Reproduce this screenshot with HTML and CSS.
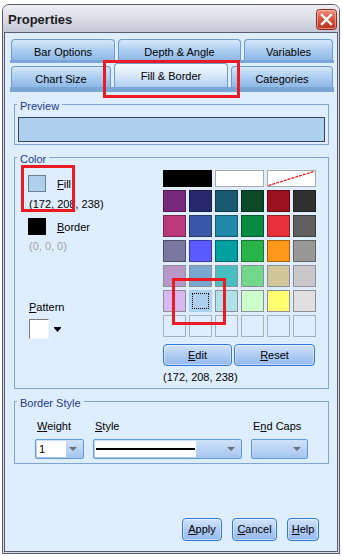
FILE: index.html
```html
<!DOCTYPE html>
<html lang="en">
<head>
    <meta charset="UTF-8">
    <meta name="viewport" content="width=device-width, initial-scale=1.0">
    <title>Properties</title>
    <link rel="stylesheet" href="styles.css">
</head>
<body>
<div class="shot">
    <div class="window">
        <div class="titlebar">
            <span class="title">Properties</span>
            <button class="close-btn" type="button" aria-label="Close">
                <svg width="21" height="21" viewBox="0 0 21 21">
                    <defs>
                        <linearGradient id="closeGrad" x1="0" y1="0" x2="0" y2="1">
                            <stop offset="0" stop-color="#ee9a84"/>
                            <stop offset="0.45" stop-color="#d8553f"/>
                            <stop offset="1" stop-color="#b9301f"/>
                        </linearGradient>
                    </defs>
                    <rect x="0.5" y="0.5" width="20" height="20" rx="3" fill="url(#closeGrad)" stroke="#8d2b1d"/>
                    <rect x="1.5" y="1.5" width="18" height="18" rx="2" fill="none" stroke="#f7c6b8" stroke-opacity="0.6"/>
                    <path d="M6 6 L15 15 M15 6 L6 15" stroke="#fff" stroke-width="2.4" stroke-linecap="square"/>
                </svg>
            </button>
        </div>

        <div class="client">
            <div class="tabs">
                <div class="tab-row">
                    <div class="tab w-bar">Bar Options</div>
                    <div class="tab w-depth">Depth &amp; Angle</div>
                    <div class="tab w-vars">Variables</div>
                </div>
                <div class="tab-strip"></div>
                <div class="tab-row">
                    <div class="tab w-size">Chart Size</div>
                    <div class="tab active w-fill">Fill &amp; Border</div>
                    <div class="tab w-cat">Categories</div>
                </div>
                <div class="tab-strip wide"></div>
            </div>

            <div class="panel">
                <fieldset class="group">
                    <legend>Preview</legend>
                    <div class="preview-body">
                        <div class="preview-bar"></div>
                    </div>
                </fieldset>

                <fieldset class="group">
                    <legend>Color</legend>
                    <div class="color-body">
                        <div class="color-left">
                            <div class="swatch-row">
                                <span class="swatch fill"></span>
                                <span><u>F</u>ill</span>
                            </div>
                            <div class="rgb">(172, 208, 238)</div>
                            <div class="swatch-row border-row">
                                <span class="swatch black"></span>
                                <span><u>B</u>order</span>
                            </div>
                            <div class="rgb muted">(0, 0, 0)</div>
                            <div class="pattern-label"><u>P</u>attern</div>
                            <div class="pattern">
                                <span class="pattern-box"></span>
                                <svg width="7" height="5" viewBox="0 0 7 5"><path d="M0 0H7V1L3.5 5L0 1Z" fill="#000"/></svg>
                            </div>
                        </div>

                        <div class="palette">
                            <div class="palette-top">
                                <span class="cell black"></span>
                                <span class="cell white"></span>
                                <span class="cell white">
                                    <svg width="47" height="15" viewBox="0 0 47 15"><line x1="0.5" y1="14.5" x2="46" y2="0.5" stroke="#e01010" stroke-width="1.2" stroke-dasharray="3 1"/></svg>
                                </span>
                            </div>
                            <div class="palette-grid">
                                <span class="cell" style="background:#7a287a"></span>
                                <span class="cell" style="background:#28286e"></span>
                                <span class="cell" style="background:#1a5870"></span>
                                <span class="cell" style="background:#0a4a28"></span>
                                <span class="cell" style="background:#9c101c"></span>
                                <span class="cell" style="background:#303030"></span>

                                <span class="cell" style="background:#b83a7a"></span>
                                <span class="cell" style="background:#3a58a8"></span>
                                <span class="cell" style="background:#2288aa"></span>
                                <span class="cell" style="background:#088a42"></span>
                                <span class="cell" style="background:#e83038"></span>
                                <span class="cell" style="background:#606060"></span>

                                <span class="cell" style="background:#7878a0"></span>
                                <span class="cell" style="background:#5a5aff"></span>
                                <span class="cell" style="background:#00a0a0"></span>
                                <span class="cell" style="background:#28b448"></span>
                                <span class="cell" style="background:#ff9818"></span>
                                <span class="cell" style="background:#989898"></span>

                                <span class="cell" style="background:#b898c8"></span>
                                <span class="cell" style="background:#78a8d0"></span>
                                <span class="cell" style="background:#48c0c0"></span>
                                <span class="cell" style="background:#70d888"></span>
                                <span class="cell" style="background:#d0c898"></span>
                                <span class="cell" style="background:#c8c8c8"></span>

                                <span class="cell" style="background:#d8b8f0"></span>
                                <span class="cell selected" style="background:#acd0ee"></span>
                                <span class="cell" style="background:#b0e0e8"></span>
                                <span class="cell" style="background:#ccffcc"></span>
                                <span class="cell" style="background:#ffff70"></span>
                                <span class="cell" style="background:#e0e0e0"></span>

                                <span class="cell empty"></span>
                                <span class="cell empty"></span>
                                <span class="cell empty"></span>
                                <span class="cell empty"></span>
                                <span class="cell empty"></span>
                                <span class="cell empty"></span>
                            </div>
                            <div class="palette-actions">
                                <button class="btn btn-edit" type="button"><u>E</u>dit</button>
                                <button class="btn btn-reset" type="button"><u>R</u>eset</button>
                            </div>
                            <div class="palette-rgb">(172, 208, 238)</div>
                        </div>
                    </div>
                </fieldset>

                <fieldset class="group">
                    <legend>Border Style</legend>
                    <div class="border-body">
                        <div class="field">
                            <span class="field-label"><u>W</u>eight</span>
                            <div class="select w-weight">
                                <span class="select-field weight-field">1</span>
                                <span class="select-arrow"></span>
                            </div>
                        </div>
                        <div class="field">
                            <span class="field-label"><u>S</u>tyle</span>
                            <div class="select w-style">
                                <span class="select-field style-field"><span class="line-sample"></span></span>
                                <span class="select-arrow"></span>
                            </div>
                        </div>
                        <div class="field">
                            <span class="field-label">E<u>n</u>d Caps</span>
                            <div class="select w-caps">
                                <span class="select-arrow"></span>
                            </div>
                        </div>
                    </div>
                </fieldset>

                <div class="dialog-actions">
                    <button class="btn btn-apply" type="button"><u>A</u>pply</button>
                    <button class="btn btn-cancel" type="button"><u>C</u>ancel</button>
                    <button class="btn btn-help" type="button"><u>H</u>elp</button>
                </div>
            </div>
        </div>
    </div>

    <!-- red callouts drawn over the dialog -->
    <div class="mark mark-tab"></div>
    <div class="mark mark-fill"></div>
    <div class="mark mark-cell"></div>
</div>
</body>
</html>
```

FILE: styles.css
```css
* {
    box-sizing: border-box;
}

body {
    margin: 0;
    background: #fff;
    font-family: "Liberation Sans", Arial, sans-serif;
    font-size: 11px;
    color: #000;
}

.shot {
    position: relative;
    width: 342px;
    height: 556px;
    padding: 4px 0 0 2px;
}

/* window frame */
.window {
    width: 338px;
    height: 550px;
    border: 1px solid #5c5c70;
    border-radius: 7px 7px 0 0;
    background: #d6d8e4;
    display: flex;
    flex-direction: column;
}

.titlebar {
    flex: none;
    height: 27px;
    display: flex;
    align-items: center;
    justify-content: space-between;
    padding: 2px 2px 0 5px;
    border-radius: 6px 6px 0 0;
    background: linear-gradient(#efeff4, #d9dbe6 55%, #c4c7d7);
}

.title {
    font-size: 13px;
    font-weight: bold;
    line-height: 16px;
    color: #1c1c1c;
}

.close-btn {
    width: 21px;
    height: 21px;
    padding: 0;
    border: 0;
    background: none;
}

.close-btn svg {
    display: block;
}

.client {
    flex: 1;
    margin: 0 1px 1px;
    border: 1px solid #5c5c70;
    background: #dfeefe;
    display: flex;
    flex-direction: column;
}

/* tabs */
.tabs {
    padding: 6px 3px 0 6px;
}

.tab-row {
    display: flex;
    align-items: flex-end;
    gap: 3px;
}

.tab {
    height: 21px;
    padding-top: 6px;
    line-height: 13px;
    text-align: center;
    border: 1px solid #6b9bd0;
    border-bottom: 0;
    border-radius: 4px 4px 0 0;
    background: linear-gradient(#d6e8fb, #a9cbef 55%, #8fb9e6);
}

.tab.active {
    height: 24px;
    background: linear-gradient(#f6faff, #d8e8fa 50%, #aecdf0);
}

.w-bar { width: 104px; }
.w-depth { width: 123px; }
.w-vars { width: 89px; }
.w-size { width: 100px; }
.w-fill { width: 114px; }
.w-cat { width: 102px; }

.tab-strip {
    height: 3px;
    margin-left: -1px;
    background: #7aa7d8;
}

.tab-strip.wide {
    height: 5px;
}

/* panel */
.panel {
    flex: 1;
    padding: 4px 8px 0 9px;
    display: flex;
    flex-direction: column;
}

.group {
    margin: 0;
    padding: 0;
    min-width: 0;
    border: 1px solid #7fa6d3;
}

.group + .group {
    margin-top: 4px;
}

.group legend {
    margin-left: 2px;
    padding: 4px 3px 0;
    line-height: 12px;
    color: #22398c;
}

.preview-body {
    padding: 5px 3px 2px;
}

.preview-bar {
    height: 25px;
    border: 1px solid #3a4656;
    background: #acd0ee;
}

/* color group */
.color-body {
    display: flex;
    padding: 5px 0 4px 13px;
}

.color-left {
    width: 135px;
    padding-top: 5px;
}

.swatch-row {
    display: flex;
    align-items: center;
    gap: 11px;
    height: 17px;
}

.swatch-row.border-row {
    margin-top: 7px;
}

.swatch {
    width: 18px;
    height: 17px;
    border: 1px solid #6f8092;
}

.swatch.fill {
    background: #acd0ee;
}

.swatch.black {
    background: #000;
    border-color: #000;
}

.rgb {
    margin: 6px 0 0 1px;
    line-height: 13px;
}

.rgb.muted {
    margin-top: 5px;
    color: #a0a0a0;
}

.pattern-label {
    margin: 48px 0 0 1px;
    line-height: 13px;
}

.pattern {
    display: flex;
    align-items: center;
    gap: 5px;
    margin: 5px 0 0 1px;
}

.pattern-box {
    width: 20px;
    height: 20px;
    background: #fff;
    border: 1px solid;
    border-color: #7c7c7c #f4f4f4 #f4f4f4 #7c7c7c;
}

.palette {
    width: 153px;
}

.palette-top {
    display: flex;
    gap: 3px;
    height: 17px;
}

.palette-top .cell {
    flex: 1;
}

.palette-grid {
    display: grid;
    grid-template-columns: repeat(6, 23px);
    grid-auto-rows: 22px;
    gap: 3px;
    margin-top: 3px;
}

.cell {
    display: block;
    position: relative;
    border: 1px solid rgba(0, 0, 0, 0.35);
}

.cell svg {
    display: block;
}

.palette-grid .cell:nth-child(n+19) {
    border-color: #8f8f9a;
}

.cell.black {
    background: #000;
    border-color: #000;
}

.cell.white {
    background: #fff;
    border-color: #a8a8a8;
}

.palette-grid .cell.selected {
    border-color: #acd0ee;
}

.cell.selected::after {
    content: "";
    position: absolute;
    inset: 2px;
    border: 1px dotted #000;
}

.palette-grid .cell.empty {
    background: transparent;
    border-color: #a7afba;
}

.palette-actions {
    display: flex;
    gap: 2px;
    margin-top: 7px;
}

.palette-rgb {
    margin-top: 5px;
    line-height: 13px;
}

/* buttons */
.btn {
    height: 22px;
    padding: 0;
    font: inherit;
    line-height: 13px;
    color: #000;
    border: 1px solid #2f7bdb;
    border-radius: 4px;
    background: linear-gradient(#d3e4fb, #b0ccf3 50%, #95baee);
    box-shadow: inset 0 0 0 1px rgba(255, 255, 255, 0.45);
}

.btn-edit { width: 69px; }
.btn-reset { width: 81px; }
.btn-apply { width: 40px; height: 23px; }
.btn-cancel { width: 45px; height: 23px; }
.btn-help { width: 32px; height: 23px; }

/* border style group */
.border-body {
    display: flex;
    gap: 9px;
    padding: 11px 0 4px 20px;
}

.field {
    display: flex;
    flex-direction: column;
    gap: 6px;
}

.field-label {
    padding-left: 2px;
    line-height: 13px;
}

.select {
    height: 20px;
    padding: 1px;
    display: flex;
    align-items: center;
    border: 1px solid #5f9be2;
    border-radius: 2px;
    background: linear-gradient(#cfe2f9, #a5c5f0);
}

.w-weight { width: 49px; }
.w-style { width: 149px; }
.w-caps { width: 57px; }

.select-field {
    align-self: stretch;
    display: flex;
    align-items: center;
    background: #fff;
}

.weight-field {
    width: 29px;
    padding-left: 2px;
}

.style-field {
    width: 101px;
    padding: 0 1px;
}

.line-sample {
    width: 100%;
    height: 2px;
    background: #000;
}

.select-arrow {
    margin-left: auto;
    margin-right: 5px;
    border-left: 4px solid transparent;
    border-right: 4px solid transparent;
    border-top: 4px solid #6e6e76;
}

.dialog-actions {
    display: flex;
    justify-content: flex-end;
    gap: 10px;
    margin-top: 54px;
    padding-right: 10px;
}

/* red callouts */
.mark {
    position: absolute;
    border: 3px solid #ec1a22;
}

.mark-tab {
    left: 103px;
    top: 60px;
    width: 137px;
    height: 38px;
}

.mark-fill {
    left: 21px;
    top: 165px;
    width: 54px;
    height: 47px;
}

.mark-cell {
    left: 172px;
    top: 278px;
    width: 54px;
    height: 47px;
}
```
